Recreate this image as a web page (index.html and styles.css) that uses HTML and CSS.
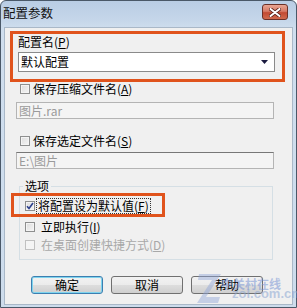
FILE: index.html
```html
<!DOCTYPE html>
<html>
<head>
<meta charset="utf-8">
<link rel="stylesheet" href="styles.css">
</head>
<body>
<div class="window">
  <div class="titlebar">
    <span class="title">配置参数</span>
    <span class="close"><svg width="12" height="9" viewBox="0 0 12 9"><path d="M1.5 1 L10.5 8 M10.5 1 L1.5 8" stroke="#5a2018" stroke-width="3.6" stroke-linecap="round"/><path d="M1.5 1 L10.5 8 M10.5 1 L1.5 8" stroke="#ffffff" stroke-width="2" stroke-linecap="round"/></svg></span>
  </div>
  <div class="client">
    <div class="hl hl-top">
      <div class="label">配置名(<u>P</u>)</div>
      <div class="combo"><span>默认配置</span><svg class="arrow" width="7" height="4" viewBox="0 0 7 4"><path d="M0 0 H7 L3.5 4 Z" fill="#1a1a40"/></svg></div>
    </div>
    <div class="row r1"><span class="cb"></span><span>保存压缩文件名(<u>A</u>)</span></div>
    <div class="field f1">图片.rar</div>
    <div class="row r2"><span class="cb"></span><span>保存选定文件名(<u>S</u>)</span></div>
    <div class="field f2">E:\图片</div>
    <fieldset class="group">
      <legend>选项</legend>
      <div class="hl hl-opt">
        <div class="row"><span class="cb checked"><svg width="8" height="8" viewBox="0 0 8 8"><path d="M1 4.2 L3 6.5 L7 1" fill="none" stroke="#2b3f8c" stroke-width="1.6"/></svg></span><span class="focus">将配置设为默认值(<u>F</u>)</span></div>
      </div>
      <div class="row g2"><span class="cb"></span><span>立即执行(<u>I</u>)</span></div>
      <div class="row g3 disabled"><span class="cb dis"></span><span>在桌面创建快捷方式(<u>D</u>)</span></div>
    </fieldset>
    <div class="buttons">
      <button class="btn default">确定</button>
      <button class="btn">取消</button>
      <button class="btn">帮助</button>
    </div>
    <div class="watermark">
      <svg class="zlogo" width="26" height="32" viewBox="0 0 26 32"><path d="M3 2 H25 L10 25 H24 L22 31 H1 L16 8 H2 Z" fill="#8fa3d8" opacity="0.45"/></svg>
      <span class="wm-cn">中关村在线</span>
      <span class="wm-en">zol.com.cn</span>
    </div>
  </div>
</div>
</body>
</html>
```

FILE: styles.css
```css
* { box-sizing: border-box; }
body {
  margin: 0;
  font-family: "Noto Sans CJK SC", "Liberation Sans", sans-serif;
  font-size: 12px;
  color: #000;
  background: #fff;
}
.window {
  width: 297px;
  height: 308px;
  background: linear-gradient(#b9cde4 0px, #c6d7ea 20px, #cfdeee 28px, #cddcec 100%);
  border: 1px solid #4a5868;
  border-radius: 6px 6px 0 0;
  display: flex;
  flex-direction: column;
  position: relative;
}
.titlebar {
  height: 26px;
  display: flex;
  align-items: center;
  justify-content: space-between;
  padding: 0 8px 2px 2px;
}
.title {
  font-size: 12.5px;
  line-height: 16px;
  color: #111;
}
.close {
  width: 26px;
  height: 16px;
  margin-top: -2px;
  border: 1px solid #6b3027;
  border-radius: 3px;
  background: linear-gradient(#e9a592 0%, #d67a66 45%, #c24a32 55%, #d06a4e 100%);
  display: flex;
  align-items: center;
  justify-content: center;
}
.client {
  flex: 1;
  margin: 0 3px 2px 3px;
  background: #f0f0f0;
  border: 1px solid #a9b8c8;
  padding-top: 3px;
  position: relative;
  line-height: 14px;
}
.hl {
  border: 3px solid #e0531c;
}
.hl-top {
  margin-left: 5px;
  width: 275px;
  height: 51px;
  padding: 0 7px 0 5px;
}
.label {
  height: 16px;
  line-height: 16px;
}
.combo {
  margin-top: 2px;
  height: 20px;
  background: #fff;
  border: 1px solid #8a8a8a;
  display: flex;
  align-items: center;
  justify-content: space-between;
  padding: 0 6px 0 2px;
}
.row {
  height: 14px;
  display: flex;
  align-items: center;
}
.r1, .r2 {
  margin-left: 15px;
}
.r2 { margin-top: 15px; }
.cb {
  width: 10px;
  height: 10px;
  border: 1px solid #8e8f8f;
  background: linear-gradient(135deg, #dcdcdc, #f6f6f6);
  box-shadow: inset 0 0 0 1px #f4f4f4;
  margin-right: 3px;
  display: flex;
  align-items: center;
  justify-content: center;
  flex: none;
}
.cb.dis {
  border-color: #c0c0c0;
  background: #f4f4f4;
}
.field {
  margin-left: 11px;
  width: 258px;
  height: 17px;
  border: 1px solid #b4b4b4;
  background: #f4f4f4;
  color: #9a9a9a;
  padding-left: 2px;
  line-height: 15px;
}
.f1 { margin-top: 6px; }
.f2 { margin-top: 4px; border-top-color: #777; }
.group {
  margin: 10px 0 0 14px;
  width: 254px;
  border: 1px solid #d5dfe5;
  padding: 0 0 7px 0;
  min-inline-size: 0;
}
.group legend {
  padding: 0 2px;
  margin-left: 3px;
  line-height: 14px;
  height: 14px;
}
.hl-opt {
  margin-left: -9px;
  width: 154px;
  height: 24px;
  padding: 1px 0 0 11px;
  display: flex;
  align-items: center;
}
.hl-opt .cb { margin-right: 2px; }
.focus {
  outline: 1px dotted #333;
  outline-offset: 0;
  padding: 0 1px;
  line-height: 14px;
}
.g2 { margin: 3px 0 0 5px; }
.g3 { margin: 4px 0 0 5px; }
.g2 .cb, .g3 .cb { margin-right: 6px; }
.disabled { color: #a8a8a8; }
.buttons {
  margin: 16px 0 0 26px;
  display: flex;
  gap: 8px;
}
.btn {
  width: 72px;
  height: 18px;
  font-family: inherit;
  font-size: 12px;
  line-height: 14px;
  padding: 0;
  border: 1px solid #707070;
  border-radius: 3px;
  background: linear-gradient(#f2f2f2 0%, #ebebeb 50%, #dddddd 51%, #cfcfcf 100%);
  color: #000;
}
.btn.default {
  border-color: #3c7fb1;
  box-shadow: inset 0 0 0 1px #7fd4ee;
}
.watermark {
  position: absolute;
  left: 191px;
  top: 244px;
  width: 100px;
  pointer-events: none;
}
.zlogo {
  position: absolute;
  left: 0;
  top: 0;
}
.wm-cn {
  position: absolute;
  left: 25px;
  top: 6px;
  font-size: 12px;
  line-height: 12px;
  font-weight: bold;
  color: rgba(110, 140, 210, 0.5);
}
.wm-en {
  position: absolute;
  left: 36px;
  top: 15px;
  font-family: "Liberation Sans", sans-serif;
  font-weight: bold;
  font-size: 13px;
  line-height: 14px;
  color: rgba(140, 165, 210, 0.55);
}
```
